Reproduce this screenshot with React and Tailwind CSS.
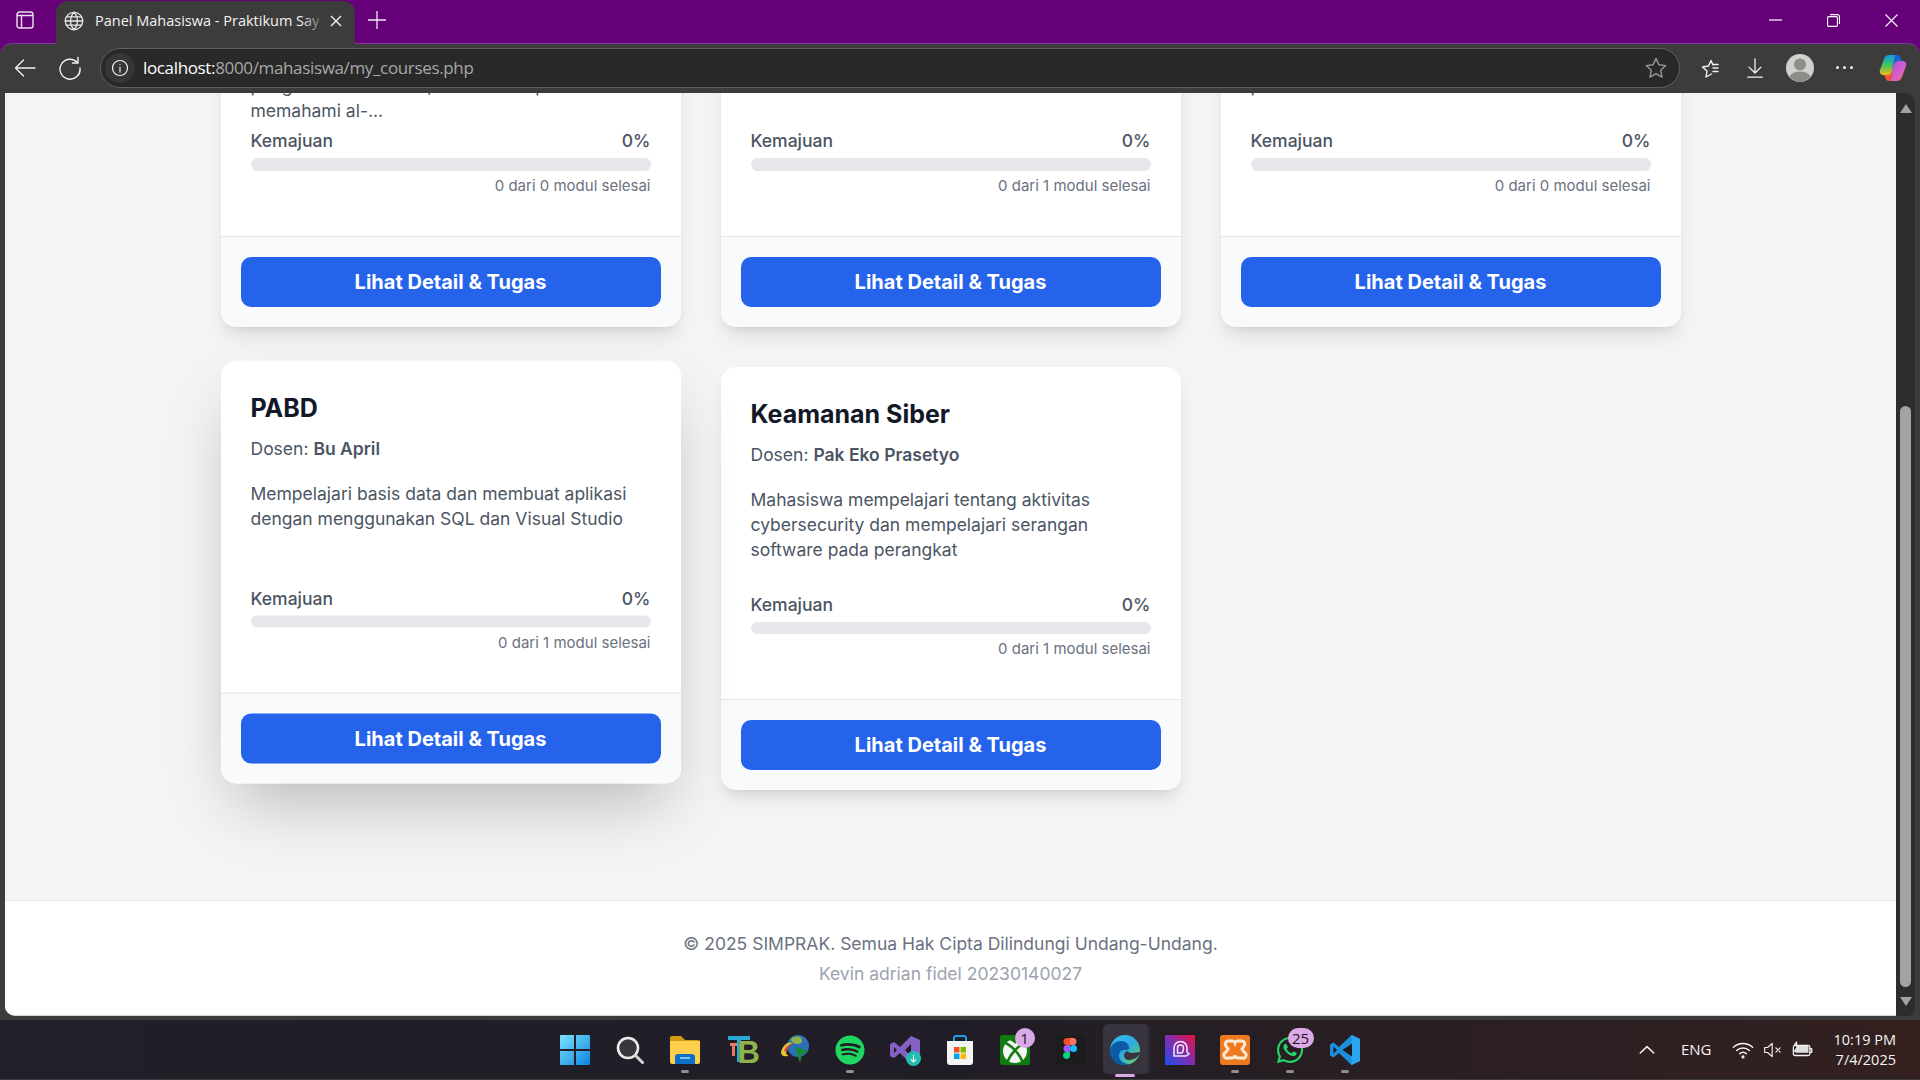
import { FaWhatsapp, FaSpotify } from "react-icons/fa";

const courses = [
  {
    name: "Algoritma",
    lecturer: "Pak Budi",
    lines: ["Mata kuliah ini berisi dasar logika dan", "materi tentang cara berpikir runtut", "pengantar teori dasar, serta untuk pada", "memahami al-..."],
    total: 0,
  },
  {
    name: "Jaringan Komputer",
    lecturer: "Pak Andi",
    lines: ["Mempelajari dasar jaringan komputer", "dan cara kerja internet"],
    total: 1,
  },
  {
    name: "Sistem Operasi",
    lecturer: "Bu Sari",
    lines: ["Mahasiswa belajar tentang cara kerja", "sistem komputer dari dasar hingga", "pada umum"],
    total: 0,
  },
  {
    name: "PABD",
    lecturer: "Bu April",
    lines: ["Mempelajari basis data dan membuat aplikasi", "dengan menggunakan SQL dan Visual Studio"],
    total: 1,
    hovered: true,
  },
  {
    name: "Keamanan Siber",
    lecturer: "Pak Eko Prasetyo",
    lines: ["Mahasiswa mempelajari tentang aktivitas", "cybersecurity dan mempelajari serangan", "software pada perangkat"],
    total: 1,
  },
];

const CourseCard = ({ course }) => (
  <div
    className={`flex flex-col bg-white rounded-[15px] overflow-hidden ${
      course.hovered
        ? "-translate-y-[6.5px] shadow-[0_31px_62px_-15px_rgba(0,0,0,0.25)]"
        : "shadow-[0_12px_19px_-4px_rgba(0,0,0,0.1),0_5px_8px_-5px_rgba(0,0,0,0.1)]"
    }`}
  >
    <div className="flex flex-col px-[30px] pt-[30px] pb-[40px]">
      <h3 className="text-[25px] leading-[35px] font-bold text-[#111827]">{course.name}</h3>
      <p className="mt-[10px] text-[17.5px] leading-[25px] text-[#4b5563]">
        Dosen: <span className="font-semibold">{course.lecturer}</span>
      </p>
      <div className="mt-[20px] h-[75px] text-[17.5px] leading-[25px] text-[#4b5563]">
        {course.lines.map((line) => (
          <p key={line} className="whitespace-nowrap">{line}</p>
        ))}
      </div>
      <div className="mt-[30px] flex justify-between text-[17.5px] leading-[25px] font-medium text-[#4b5563]">
        <span>Kemajuan</span>
        <span>0%</span>
      </div>
      <div className="mt-[5px] h-[12.5px] rounded-full bg-[#e5e7eb]"></div>
      <p className="mt-[5px] text-right text-[15px] leading-[20px] text-[#6b7280]">
        0 dari {course.total} modul selesai
      </p>
    </div>
    <div className="border-t border-[#e5e7eb] bg-[#f9fafb] p-[20px]">
      <button className="w-full h-[50px] rounded-[10px] bg-[#2563eb] text-white text-[20px] font-bold">
        Lihat Detail &amp; Tugas
      </button>
    </div>
  </div>
);

const ToolIcon = ({ children, className = "" }) => (
  <svg viewBox="0 0 24 24" fill="none" stroke="currentColor" strokeWidth="1.4" strokeLinecap="round" strokeLinejoin="round" className={className}>
    {children}
  </svg>
);

const TitleBar = () => (
  <div className="h-[43px] shrink-0 flex items-start bg-[#660078] text-white">
    <div className="w-[50px] h-[40px] flex items-center justify-center">
      <svg viewBox="0 0 18 18" className="w-[18px] h-[18px]" fill="none" stroke="#f0dff4" strokeWidth="1.4">
        <rect x="1" y="1" width="16" height="16" rx="2.5" />
        <path d="M5.5 4.5V17M1 4.5h16" />
      </svg>
    </div>
    <div className="relative z-10 ml-[6px] mt-[1px] w-[299px] h-[43px] flex items-center bg-[#3c3c3c] rounded-t-[12px] pl-[7px] pb-[4px]">
      <ToolIcon className="w-[22px] h-[22px] text-[#e8e8e8]">
        <circle cx="12" cy="12" r="9.5" />
        <path d="M2.5 12h19M3.8 7.5h16.4M3.8 16.5h16.4M12 2.5c-5 5.5-5 13.5 0 19M12 2.5c5 5.5 5 13.5 0 19" />
      </ToolIcon>
      <span className="ml-[10px] w-[224px] overflow-hidden whitespace-nowrap text-[14.5px] font-['Open_Sans',sans-serif] text-[#f2f2f2]">
        Panel Mahasiswa - Praktikum Saya
      </span>
      <div className="absolute left-[245px] top-0 w-[26px] h-full bg-gradient-to-r from-transparent to-[#3c3c3c]"></div>
      <svg viewBox="0 0 12 12" className="absolute left-[274px] top-[14px] w-[12px] h-[12px]" stroke="#f2f2f2" strokeWidth="1.4">
        <path d="M1 1l10 10M11 1L1 11" />
      </svg>
    </div>
    <div className="ml-[13px] h-[40px] flex items-center">
      <svg viewBox="0 0 18 18" className="w-[18px] h-[18px]" stroke="#f0e8f2" strokeWidth="1.3">
        <path d="M9 0v18M0 9h18" />
      </svg>
    </div>
    <div className="ml-auto h-[40px] flex items-center pr-[22px] gap-[45px]">
      <svg viewBox="0 0 13 2" className="w-[13px] h-[2px]"><path d="M0 1h13" stroke="#fff" strokeWidth="1.2" /></svg>
      <svg viewBox="0 0 13 13" className="w-[13px] h-[13px]" fill="none" stroke="#fff" strokeWidth="1.1">
        <rect x="0.6" y="2.6" width="9.8" height="9.8" rx="1.2" />
        <path d="M3 .6h7.4a2 2 0 0 1 2 2V10" />
      </svg>
      <svg viewBox="0 0 13 13" className="w-[13px] h-[13px]" stroke="#fff" strokeWidth="1.1">
        <path d="M.5.5l12 12M12.5.5l-12 12" />
      </svg>
    </div>
  </div>
);

const CopilotIcon = () => (
  <svg viewBox="0 0 28 28" className="w-[28px] h-[28px]">
    <defs>
      <linearGradient id="cpA" x1="0" y1="0" x2="0" y2="1">
        <stop offset="0" stopColor="#0f9be8" />
        <stop offset="0.5" stopColor="#3fc45a" />
        <stop offset="1" stopColor="#f4b81f" />
      </linearGradient>
      <linearGradient id="cpB" x1="0" y1="0" x2="1" y2="1">
        <stop offset="0" stopColor="#a24fe0" />
        <stop offset="0.6" stopColor="#d95fd0" />
        <stop offset="1" stopColor="#f0703a" />
      </linearGradient>
    </defs>
    <path d="M10 1h8l-5 17a4 4 0 0 1-4 3H5c-3 0-5-2-4-5l4-11c1-3 3-4 5-4z" fill="url(#cpA)" />
    <path d="M18 27h-8l5-17a4 4 0 0 1 4-3h4c3 0 5 2 4 5l-4 11c-1 3-3 4-5 4z" fill="url(#cpB)" />
    <path d="M16 1h2c2 0 3 1 4 4l1 2h-4c-2 0-3 1-4 3l-2 5z" fill="#1d63d8" />
    <path d="M12 27h-2c-2 0-3-1-4-4l-1-2h4c2 0 3-1 4-3l2-5z" fill="#f0553a" />
  </svg>
);

const Toolbar = () => (
  <div className="bg-[#660078] shrink-0">
    <div className="h-[50px] flex items-center bg-[#3c3c3c] rounded-t-[12px] border-t border-[#84389a] pb-[2px] text-[#f2f2f2]">
      <div className="w-[50px] flex justify-center">
        <ToolIcon className="w-[24px] h-[24px]"><path d="M22 12H2.5M10.5 4l-8 8 8 8" /></ToolIcon>
      </div>
      <div className="w-[40px] flex justify-center">
        <ToolIcon className="w-[24px] h-[24px]">
          <path d="M19.5 6.5A10 10 0 1 0 22 12" />
          <path d="M20 1.5V7h-5.5" />
        </ToolIcon>
      </div>
      <div className="ml-[10px] w-[1580px] h-[40px] flex items-center rounded-[20px] border border-[#5f5f5f] bg-[#292929] pl-[4px] pr-[11px]">
        <div className="w-[30px] h-[30px] rounded-full bg-[#363636] flex items-center justify-center">
          <ToolIcon className="w-[20px] h-[20px]">
            <circle cx="12" cy="12" r="9" />
            <path d="M12 11v6M12 7.5v.2" />
          </ToolIcon>
        </div>
        <span className="ml-[8px] text-[17px] font-['Open_Sans',sans-serif] tracking-[-0.35px]">
          <span className="text-white">localhost:</span>
          <span className="text-[#a8a8a8]">8000/mahasiswa/my_courses.php</span>
        </span>
        <ToolIcon className="ml-auto w-[24px] h-[24px] text-[#9a9a9a]">
          <path d="M12 2.5l2.9 6.3 6.8.8-5 4.7 1.3 6.8-6-3.4-6 3.4 1.3-6.8-5-4.7 6.8-.8z" />
        </ToolIcon>
      </div>
      <div className="flex items-center pl-[16px]">
        <ToolIcon className="w-[24px] h-[24px]">
          <path d="M10 21l1-6-4.5-4 6-1L15 4.5l2 4.5M10 21l5.500-3M17 12h5M17 15.5h5M17 8.500h5" />
        </ToolIcon>
        <ToolIcon className="ml-[24px] w-[22px] h-[22px]"><path d="M12 2v15M5.5 11l6.5 6.5 6.5-6.5M4 22h16" /></ToolIcon>
        <svg viewBox="0 0 28 28" className="ml-[20px] w-[28px] h-[28px]">
          <circle cx="14" cy="14" r="14" fill="#d2d0cc" />
          <circle cx="14" cy="10.5" r="6" fill="#8f8d89" />
          <path d="M3.5 22.5C6 18.5 10 17.5 14 17.5s8 1 10.5 5A14 14 0 0 1 14 28 14 14 0 0 1 3.5 22.5z" fill="#8f8d89" />
        </svg>
        <div className="ml-[22px] flex gap-[4px]">
          <span className="w-[3px] h-[3px] rounded-full bg-[#f2f2f2]"></span>
          <span className="w-[3px] h-[3px] rounded-full bg-[#f2f2f2]"></span>
          <span className="w-[3px] h-[3px] rounded-full bg-[#f2f2f2]"></span>
        </div>
        <div className="ml-[26px]"><CopilotIcon /></div>
      </div>
    </div>
  </div>
);

const Scrollbar = () => (
  <div className="w-[19px] shrink-0 flex flex-col items-center bg-[#2d2d2d] rounded-tr-[10px] rounded-br-[8px] pt-[11px] pb-[10px]">
    <svg viewBox="0 0 12 9" className="w-[12px] h-[9px]"><path d="M6 0l6 9H0z" fill="#a3a3a3" /></svg>
    <div className="mt-auto w-[11px] h-[581px] rounded-full bg-[#a3a3a3]"></div>
    <svg viewBox="0 0 12 9" className="mt-[10px] w-[12px] h-[9px]"><path d="M0 0h12L6 9z" fill="#a3a3a3" /></svg>
  </div>
);

const PageContent = () => (
  <div className="flex-1 min-w-0 flex flex-col overflow-hidden bg-[#f3f4f6] rounded-bl-[10px] font-['Inter',sans-serif] border-b border-[#d4d4d4]">
    <main className="flex-1 min-h-0">
      <div className="w-[1460px] mx-auto -mt-[190px] grid grid-cols-3 gap-[40px]">
        {courses.map((course) => (
          <CourseCard key={course.name} course={course} />
        ))}
      </div>
    </main>
    <footer className="h-[115px] shrink-0 bg-white border-t border-[#e5e7eb] pt-[30px] text-center text-[17.5px] leading-[25px]">
      <p className="text-[#6b7280]">© 2025 SIMPRAK. Semua Hak Cipta Dilindungi Undang-Undang.</p>
      <p className="mt-[5px] text-[#9ca3af]">Kevin adrian fidel 20230140027</p>
    </footer>
  </div>
);

const Badge = ({ children, className = "" }) => (
  <span className={`absolute top-[8px] h-[20px] rounded-full bg-[#dba8e8] text-[#1a1a1a] text-[15px] leading-[20px] text-center font-['Open_Sans',sans-serif] ${className}`}>
    {children}
  </span>
);

const taskIcons = [
  {
    id: "start",
    icon: (
      <svg viewBox="0 0 30 30" className="w-[30px] h-[30px]">
        <defs>
          <linearGradient id="winG" x1="0" y1="0" x2="1" y2="1">
            <stop offset="0" stopColor="#7fe3fb" />
            <stop offset="1" stopColor="#0a84e0" />
          </linearGradient>
        </defs>
        <path d="M1 0h13v14H0V1a1 1 0 0 1 1-1zM16 0h13a1 1 0 0 1 1 1v13H16zM0 16h14v14H1a1 1 0 0 1-1-1zM16 16h14v13a1 1 0 0 1-1 1H16z" fill="url(#winG)" />
      </svg>
    ),
  },
  {
    id: "search",
    icon: (
      <svg viewBox="0 0 28 28" className="w-[28px] h-[28px]" fill="none">
        <circle cx="12" cy="12" r="10" fill="#3a3640" stroke="#ececec" strokeWidth="2.6" />
        <path d="M19.5 19.5L26.5 26.5" stroke="#d4d4d4" strokeWidth="3" strokeLinecap="round" />
      </svg>
    ),
  },
  {
    id: "files",
    running: true,
    icon: (
      <svg viewBox="0 0 30 28" className="w-[30px] h-[28px]">
        <path d="M0 2a2 2 0 0 1 2-2h9l4 4h13a2 2 0 0 1 2 2v4H0z" fill="#d59b10" />
        <path d="M0 5h30v21a2 2 0 0 1-2 2H2a2 2 0 0 1-2-2z" fill="#fdcf4c" />
        <path d="M5 28v-7a3 3 0 0 1 3-3h14a3 3 0 0 1 3 3v7z" fill="#0f70c9" />
        <path d="M10 22h10" stroke="#7cc5f5" strokeWidth="2" />
      </svg>
    ),
  },
  {
    id: "tb",
    icon: (
      <div className="relative ml-[5px] w-[30px] h-[28px] font-['Liberation_Sans',sans-serif] font-bold leading-none">
        <div className="absolute left-0 top-0 w-[22px] h-[4px] bg-[#29a9d6]"></div>
        <div className="absolute left-[9px] top-0 w-[4px] h-[26px] bg-[#29a9d6]"></div>
        <div className="absolute left-[2px] top-[7px] w-[7px] h-[3px] bg-[#e87b5f]"></div>
        <div className="absolute left-[4px] top-[7px] w-[3px] h-[13px] bg-[#e87b5f]"></div>
        <span className="absolute left-[10px] top-[1px] text-[31px] text-[#8db34a]">B</span>
      </div>
    ),
  },
  {
    id: "idm",
    icon: (
      <svg viewBox="0 0 30 30" className="w-[30px] h-[30px]">
        <circle cx="18" cy="11" r="11" fill="#2c6fb5" />
        <path d="M11 4c3-3 8-3 10-1s1 6-3 6-7-2-7-5z" fill="#8fb44a" />
        <path d="M1 17C3 9 9 6 13 8c-4 1-7 4-7 9 0 2 1 3 3 4-5 1-8 0-8-4z" fill="#e8c833" />
        <path d="M4 16c2-5 5-7 8-7-3 2-5 5-5 8z" fill="#d94848" />
        <path d="M15 12l14 4-7 3-2 9z" fill="#1c8a2e" />
      </svg>
    ),
  },
  {
    id: "spotify",
    running: true,
    icon: <FaSpotify className="w-[30px] h-[30px] text-[#1ed760]" />,
  },
  {
    id: "vs",
    icon: (
      <div className="relative w-[30px] h-[30px]">
        <svg viewBox="0 0 30 30" className="w-[30px] h-[30px]">
          <path d="M21 1l9 4v20l-9 4-11-11-6 5-4-2V9l4-2 6 5z" fill="#8661c5" />
          <path d="M21 9l-6 6 6 6zM4 12v6l3-3z" fill="#1f1a28" />
        </svg>
        <span className="absolute right-[-1px] bottom-[-1px] w-[15px] h-[15px] rounded-full bg-[#20bdb0] flex items-center justify-center">
          <svg viewBox="0 0 10 10" className="w-[9px] h-[9px]" fill="none" stroke="#fff" strokeWidth="1.2"><path d="M5 1v8M2 6l3 3 3-3" /></svg>
        </span>
      </div>
    ),
  },
  {
    id: "store",
    icon: (
      <svg viewBox="0 0 30 30" className="w-[30px] h-[30px]">
        <path d="M9 6V3a2 2 0 0 1 2-2h8a2 2 0 0 1 2 2v3" fill="none" stroke="#1ea0e0" strokeWidth="2" />
        <path d="M2 6h26v21a3 3 0 0 1-3 3H5a3 3 0 0 1-3-3z" fill="#f4f4f4" />
        <path d="M9 12h5.500v5.500H9z" fill="#f25022" />
        <path d="M15.500 12H21v5.500h-5.500z" fill="#7fba00" />
        <path d="M9 18.500h5.500V24H9z" fill="#00a4ef" />
        <path d="M15.500 18.500H21V24h-5.500z" fill="#ffb900" />
      </svg>
    ),
  },
  {
    id: "xbox",
    badge: <Badge className="left-[27px] w-[20px]">1</Badge>,
    icon: (
      <svg viewBox="0 0 30 30" className="w-[30px] h-[30px]">
        <rect width="30" height="30" rx="2" fill="#107c10" />
        <circle cx="15" cy="16" r="12" fill="#f4f4f4" />
        <path d="M5 8c6 2 15 11 18 20M25 8C19 10 10 19 7 28" fill="none" stroke="#107c10" strokeWidth="2.4" />
        <path d="M9 5c3 1 5 2 6 4 1-2 3-3 6-4-4-2-8-2-12 0z" fill="#107c10" />
      </svg>
    ),
  },
  {
    id: "figma",
    icon: (
      <svg viewBox="0 0 30 30" className="w-[30px] h-[30px]">
        <rect width="30" height="30" rx="2" fill="#1c1c1c" />
        <path d="M12 3h3v7h-3a3.500 3.500 0 0 1 0-7z" fill="#f24e1e" />
        <path d="M15 3h3a3.500 3.500 0 0 1 0 7h-3z" fill="#ff7262" />
        <path d="M12 10h3v7h-3a3.500 3.500 0 0 1 0-7z" fill="#a259ff" />
        <circle cx="18.500" cy="13.500" r="3.500" fill="#1abcfe" />
        <path d="M12 17h3v3.500a3.500 3.500 0 1 1-3-3.500z" fill="#0acf83" />
      </svg>
    ),
  },
  {
    id: "edge",
    active: true,
    icon: (
      <svg viewBox="0 0 30 30" className="w-[30px] h-[30px]">
        <defs>
          <linearGradient id="edgeA" x1="0" y1="0" x2="1" y2="1">
            <stop offset="0" stopColor="#35c1f1" />
            <stop offset="0.5" stopColor="#2ea8e0" />
            <stop offset="1" stopColor="#6ad85b" />
          </linearGradient>
        </defs>
        <circle cx="15" cy="15" r="15" fill="url(#edgeA)" />
        <path d="M0 15C1 9 6 6 11 6c6 0 8 4 8 7 0 1-1 2-3 2h-1c-4 0-6 2-6 6 0 4 4 8 10 8-2 1-4 1-6 1C6 30 0 24 0 15z" fill="#0c59a4" />
        <path d="M30 17c-1 5-6 8-11 8-3 0-5-2-5-5 0-1 1-3 3-4 1 1 3 2 5 2 3 0 5-1 8-1z" fill="#37343d" />
      </svg>
    ),
  },
  {
    id: "proton",
    icon: (
      <svg viewBox="0 0 30 30" className="w-[30px] h-[30px]">
        <defs>
          <linearGradient id="protonG" x1="0" y1="1" x2="1" y2="0">
            <stop offset="0" stopColor="#1d4ff0" />
            <stop offset="0.55" stopColor="#8a2ba8" />
            <stop offset="1" stopColor="#e8123a" />
          </linearGradient>
        </defs>
        <rect width="30" height="30" fill="url(#protonG)" />
        <path d="M9 21V13a6.500 6.500 0 0 1 13 0v4l2 2-3 2H9zM12.500 18v-5a3 3 0 0 1 6 0c0 3-1 5-3 5z" fill="none" stroke="#f0e6f8" strokeWidth="1.5" />
      </svg>
    ),
  },
  {
    id: "xampp",
    running: true,
    icon: (
      <svg viewBox="0 0 30 30" className="w-[30px] h-[30px]">
        <rect width="30" height="30" rx="3" fill="#ee7a1f" />
        <path d="M8 6h4a3 3 0 0 1 3 2 3 3 0 0 1 3-2h4a3 3 0 0 1 2 5l-2 3 2 3a3 3 0 0 1-2 6h-4a3 3 0 0 1-3-3 3 3 0 0 1-3 3H8a3 3 0 0 1-2-6l2-3-2-3a3 3 0 0 1 2-5z" fill="none" stroke="#fbe9d4" strokeWidth="3" />
      </svg>
    ),
  },
  {
    id: "whatsapp",
    running: true,
    badge: <Badge className="left-[25px] w-[26px]">25</Badge>,
    icon: <FaWhatsapp className="w-[30px] h-[30px] text-[#25d366]" />,
  },
  {
    id: "vscode",
    running: true,
    icon: (
      <svg viewBox="0 0 30 30" className="w-[30px] h-[30px]">
        <path d="M21.500 0L30 4v22l-8.500 4L9 18l-5.500 4.500L0 20.500v-11L3.500 7.500 9 12z" fill="#1c8fdc" />
        <path d="M21.500 0L30 4v22l-8.500 4z" fill="#2aa5ee" />
        <path d="M22 8.500L12.500 15l9.500 6.500zM3.500 11.500v7L7 15z" fill="#1f1b26" />
      </svg>
    ),
  },
];

const Taskbar = () => (
  <div className="h-[59px] shrink-0 grid grid-cols-[1fr_auto_1fr] items-center bg-gradient-to-r from-[#1f2029] via-[#211d26] to-[#33201f] text-[#f4f4f4] font-['Open_Sans',sans-serif]">
    <div></div>
    <div className="flex h-full">
      {taskIcons.map((item) => (
        <div key={item.id} className="relative w-[55px] h-full flex items-center justify-center">
          {item.active && (
            <div className="absolute left-[5px] top-[4px] w-[45px] h-[50px] rounded-[5px] bg-[#37343d] shadow-[3px_0_0_#2b2830]"></div>
          )}
          <div className="relative">{item.icon}</div>
          {item.badge}
          {item.running && (
            <span className="absolute left-[23px] bottom-[6px] w-[8px] h-[3px] rounded-full bg-[#8f8f8f]"></span>
          )}
          {item.active && (
            <span className="absolute left-[17px] bottom-[2px] w-[20px] h-[3px] rounded-full bg-[#dba8e8]"></span>
          )}
        </div>
      ))}
    </div>
    <div className="flex items-center justify-end pr-[24px]">
      <ToolIcon className="w-[18px] h-[18px]"><path d="M3 16l9-8.500 9 8.500" strokeWidth="2" /></ToolIcon>
      <span className="ml-[25px] text-[15px]">ENG</span>
      <ToolIcon className="ml-[21px] w-[22px] h-[22px]">
        <path d="M1.5 9c6-5.500 15-5.500 21 0M5 12.500c4-3.500 10-3.500 14 0M8.500 16c2-1.800 5-1.800 7 0" strokeWidth="1.6" />
        <circle cx="12" cy="19.5" r="1" fill="currentColor" />
      </ToolIcon>
      <ToolIcon className="ml-[9px] w-[20px] h-[20px]">
        <path d="M2 9v6h3.500L11 20V4L5.500 9zM15.500 9.500l5 5M20.500 9.500l-5 5" />
      </ToolIcon>
      <ToolIcon className="ml-[9px] w-[22px] h-[22px]">
        <rect x="1.5" y="7" width="18" height="11" rx="2" />
        <path d="M19.500 10.500h2v4h-2" />
        <path d="M2 13l4-6h12v8H4z" fill="currentColor" stroke="none" opacity="0.9" />
        <path d="M5 8V3.500M5 3.500L3 6" />
      </ToolIcon>
      <div className="ml-[19px] text-right text-[14.5px] leading-[20px]">
        <p>10:19 PM</p>
        <p>7/4/2025</p>
      </div>
    </div>
  </div>
);

const App = () => {
  return (
    <div className="w-[1920px] h-screen flex flex-col overflow-hidden bg-[#3c3c3c]">
      <TitleBar />
      <Toolbar />
      <div className="h-[923px] shrink-0 flex pl-[5px] pr-[5px]">
        <PageContent />
        <Scrollbar />
      </div>
      <div className="h-[4px] shrink-0"></div>
      <Taskbar />
    </div>
  );
};

export default App;
